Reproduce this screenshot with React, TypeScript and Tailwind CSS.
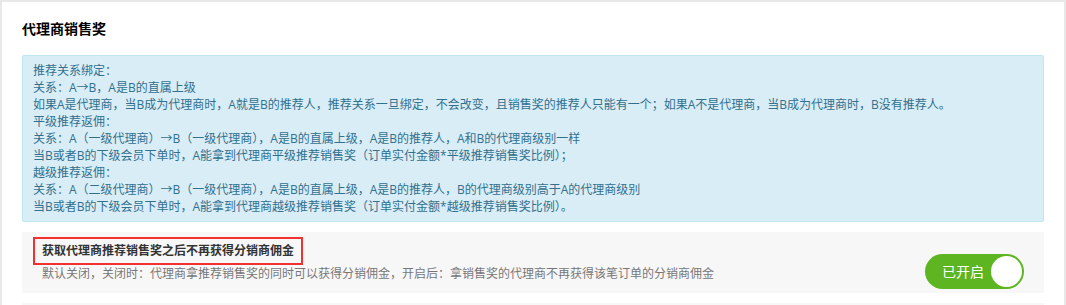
export default function App() {
  const lines = [
    "推荐关系绑定：",
    "关系：A→B，A是B的直属上级",
    "如果A是代理商，当B成为代理商时，A就是B的推荐人，推荐关系一旦绑定，不会改变，且销售奖的推荐人只能有一个；如果A不是代理商，当B成为代理商时，B没有推荐人。",
    "平级推荐返佣：",
    "关系：A（一级代理商）→B（一级代理商），A是B的直属上级，A是B的推荐人，A和B的代理商级别一样",
    "当B或者B的下级会员下单时，A能拿到代理商平级推荐销售奖（订单实付金额*平级推荐销售奖比例）；",
    "越级推荐返佣：",
    "关系：A（二级代理商）→B（一级代理商），A是B的直属上级，A是B的推荐人，B的代理商级别高于A的代理商级别",
    "当B或者B的下级会员下单时，A能拿到代理商越级推荐销售奖（订单实付金额*越级推荐销售奖比例）。",
  ];

  return (
    <div
      className="h-[305px] w-full overflow-hidden bg-[#e8e8e8] pl-[2px] pr-[2px] pt-[2px]"
      style={{ fontFamily: '"Open Sans", "Noto Sans CJK SC", sans-serif' }}
    >
      <div className="h-full bg-white px-[20px] pt-[17px]">
        <h2 className="mb-[16px] text-[14px] font-bold leading-[20px] text-black">代理商销售奖</h2>

        {/* rules box */}
        <div className="rounded-[2px] border border-[#bce8f1] bg-[#d9edf7] px-[10px] py-[6px] text-[12px] leading-[17px] text-[#31708f]">
          {lines.map((l, i) => (
            <div key={i}>{l}</div>
          ))}
        </div>

        <div className="mt-[10px] flex h-[61px] justify-between bg-[#f7f7f7] pl-[11px] pt-[5px]">
          <div>
            <div className="inline-block h-[28px] border-2 border-[#f23030] px-[7px] pt-[1px] text-[12px] font-bold leading-[22px] text-[#333]">
              获取代理商推荐销售奖之后不再获得分销商佣金
            </div>
            <div className="pl-[9px] text-[12px] leading-[17px] text-[#777]">
              默认关闭，关闭时：代理商拿推荐销售奖的同时可以获得分销佣金，开启后：拿销售奖的代理商不再获得该笔订单的分销商佣金
            </div>
          </div>
          <button className="mr-[20px] mt-[17px] flex h-[35px] w-[99px] items-center justify-between rounded-full bg-[#5db521] pl-[17px] pr-[2px]">
            <span className="text-[14px] leading-none text-white">已开启</span>
            <span className="h-[31px] w-[31px] rounded-full bg-white" />
          </button>
        </div>

        <div className="mt-[10px] h-[20px] bg-[#f7f7f7]" />
      </div>
    </div>
  );
}
